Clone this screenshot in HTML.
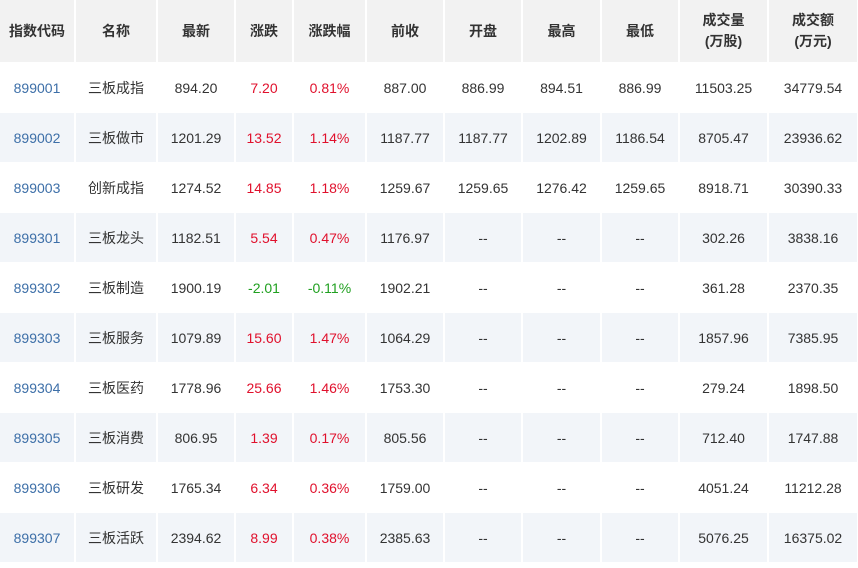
<!DOCTYPE html>
<html><head><meta charset="utf-8"><style>
html,body{margin:0;padding:0;background:#fff;width:858px;height:568px;overflow:hidden}
table{border-collapse:collapse;table-layout:fixed;width:858px;font-family:"Liberation Sans","Noto Sans CJK SC",sans-serif;font-size:14px;color:#333}
td,th{text-align:center;border-right:2px solid #fff;border-bottom:1px solid #fff;padding:0;white-space:nowrap}
th{background:#f2f2f2;height:62px;font-weight:bold;line-height:21px}
td{height:49px}
tr:nth-child(odd) td{background:#f2f5f9}
tr:nth-child(even) td{background:#fff}
td.c{color:#3d6fa8}
.r{color:#e0102c}.g{color:#20a020}
</style></head><body>
<table>
<colgroup><col style="width:75px"><col style="width:82px"><col style="width:78px"><col style="width:58px"><col style="width:73px"><col style="width:78px"><col style="width:78px"><col style="width:79px"><col style="width:78px"><col style="width:89px"><col style="width:90px"></colgroup>
<tr><th>指数代码</th><th>名称</th><th>最新</th><th>涨跌</th><th>涨跌幅</th><th>前收</th><th>开盘</th><th>最高</th><th>最低</th><th>成交量<br>(万股)</th><th>成交额<br>(万元)</th></tr>
<tr><td class="c">899001</td><td>三板成指</td><td>894.20</td><td class="r">7.20</td><td class="r">0.81%</td><td>887.00</td><td>886.99</td><td>894.51</td><td>886.99</td><td>11503.25</td><td>34779.54</td></tr>
<tr><td class="c">899002</td><td>三板做市</td><td>1201.29</td><td class="r">13.52</td><td class="r">1.14%</td><td>1187.77</td><td>1187.77</td><td>1202.89</td><td>1186.54</td><td>8705.47</td><td>23936.62</td></tr>
<tr><td class="c">899003</td><td>创新成指</td><td>1274.52</td><td class="r">14.85</td><td class="r">1.18%</td><td>1259.67</td><td>1259.65</td><td>1276.42</td><td>1259.65</td><td>8918.71</td><td>30390.33</td></tr>
<tr><td class="c">899301</td><td>三板龙头</td><td>1182.51</td><td class="r">5.54</td><td class="r">0.47%</td><td>1176.97</td><td>--</td><td>--</td><td>--</td><td>302.26</td><td>3838.16</td></tr>
<tr><td class="c">899302</td><td>三板制造</td><td>1900.19</td><td class="g">-2.01</td><td class="g">-0.11%</td><td>1902.21</td><td>--</td><td>--</td><td>--</td><td>361.28</td><td>2370.35</td></tr>
<tr><td class="c">899303</td><td>三板服务</td><td>1079.89</td><td class="r">15.60</td><td class="r">1.47%</td><td>1064.29</td><td>--</td><td>--</td><td>--</td><td>1857.96</td><td>7385.95</td></tr>
<tr><td class="c">899304</td><td>三板医药</td><td>1778.96</td><td class="r">25.66</td><td class="r">1.46%</td><td>1753.30</td><td>--</td><td>--</td><td>--</td><td>279.24</td><td>1898.50</td></tr>
<tr><td class="c">899305</td><td>三板消费</td><td>806.95</td><td class="r">1.39</td><td class="r">0.17%</td><td>805.56</td><td>--</td><td>--</td><td>--</td><td>712.40</td><td>1747.88</td></tr>
<tr><td class="c">899306</td><td>三板研发</td><td>1765.34</td><td class="r">6.34</td><td class="r">0.36%</td><td>1759.00</td><td>--</td><td>--</td><td>--</td><td>4051.24</td><td>11212.28</td></tr>
<tr><td class="c">899307</td><td>三板活跃</td><td>2394.62</td><td class="r">8.99</td><td class="r">0.38%</td><td>2385.63</td><td>--</td><td>--</td><td>--</td><td>5076.25</td><td>16375.02</td></tr>
</table>
</body></html>
